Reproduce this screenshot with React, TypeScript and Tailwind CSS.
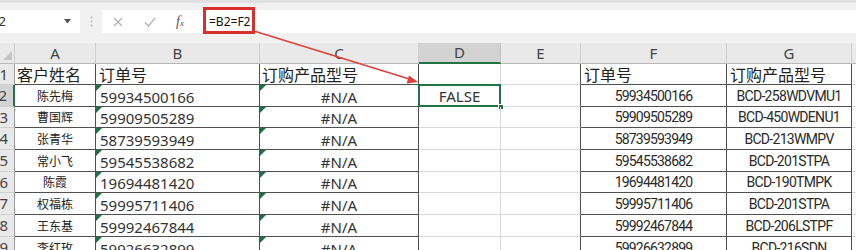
import React from "react";

type Row = { n: number; a: string; b: string; f: string; g: string; h: string };

const rows: Row[] = [
  { n: 2, a: "陈先梅", b: "59934500166", f: "59934500166", g: "BCD-258WDVMU1", h: "h-[22px]" },
  { n: 3, a: "曹国辉", b: "59909505289", f: "59909505289", g: "BCD-450WDENU1", h: "h-[21px]" },
  { n: 4, a: "张青华", b: "58739593949", f: "58739593949", g: "BCD-213WMPV", h: "h-[22px]" },
  { n: 5, a: "常小飞", b: "59545538682", f: "59545538682", g: "BCD-201STPA", h: "h-[22px]" },
  { n: 6, a: "陈霞", b: "19694481420", f: "19694481420", g: "BCD-190TMPK", h: "h-[21px]" },
  { n: 7, a: "权福栋", b: "59995711406", f: "59995711406", g: "BCD-201STPA", h: "h-[22px]" },
  { n: 8, a: "王东基", b: "59992467844", f: "59992467844", g: "BCD-206LSTPF", h: "h-[22px]" },
  { n: 9, a: "李红玫", b: "59926632899", f: "59926632899", g: "BCD-216SDN", h: "h-[22px]" },
];

const cjk = "font-['Noto_Sans_CJK_SC','Noto_Sans',sans-serif]";
const num = "font-['Noto_Sans','Noto_Sans_CJK_SC',sans-serif]";
const narrow = "font-['Roboto','Liberation_Sans',sans-serif]";

function Tri() {
  return (
    <span className="absolute top-0 left-0 w-0 h-0 border-t-[6px] border-t-[#1e7145] border-r-[6px] border-r-transparent" />
  );
}

export default function App() {
  return (
    <div className="relative w-[856px] h-[250px] overflow-hidden bg-white text-[#222]">
      {/* Formula bar */}
      <div className="h-[43px] bg-[#f1f1f1] border-t-[3px] border-t-[#e0e0e0] flex items-start pt-[7px]">
        <div className="relative w-[80px] h-[23px] bg-white flex items-center overflow-hidden">
          <span className={`-ml-[11px] text-[13px] text-[#333] ${num}`}>D2</span>
          <svg className="absolute left-[64px] top-[9px]" width="7" height="5" viewBox="0 0 7 5">
            <path d="M0 0 L7 0 L3.5 4.5 Z" fill="#555" />
          </svg>
        </div>
        <div className="w-[22px] h-[23px] flex items-center justify-center">
          <svg width="3" height="11" viewBox="0 0 3 11">
            <circle cx="1.5" cy="1.5" r="1" fill="#b8b8b8" />
            <circle cx="1.5" cy="5.5" r="1" fill="#b8b8b8" />
            <circle cx="1.5" cy="9.5" r="1" fill="#b8b8b8" />
          </svg>
        </div>
        <div className="flex-1 h-[23px] bg-white flex items-center">
          <div className="w-[32px] flex justify-center">
            <svg width="10" height="10" viewBox="0 0 10 10">
              <path d="M1 1 L9 9 M9 1 L1 9" stroke="#b3b3b3" strokeWidth="1.2" />
            </svg>
          </div>
          <div className="w-[32px] flex justify-center">
            <svg width="12" height="10" viewBox="0 0 12 10">
              <path d="M1 5.5 L4.5 9 L11 1" stroke="#b3b3b3" strokeWidth="1.2" fill="none" />
            </svg>
          </div>
          <div className="w-[28px] flex justify-center">
            <span className="italic text-[14px] text-[#555] font-['Liberation_Serif',serif] leading-none">
              f<span className="text-[9px]">x</span>
            </span>
          </div>
          <span className={`ml-[15px] text-[12px] text-[#111] ${num}`}>=B2=F2</span>
        </div>
      </div>

      {/* Column headers */}
      <div className={`flex h-[21px] ${num} text-[15px] text-[#444]`}>
        <div className="relative w-[15px] bg-[#e9e9e9] border-r border-r-[#cfcfcf] border-b border-b-[#b8b8b8]">
          <span className="absolute right-[2px] bottom-[3px] w-0 h-0 border-l-[9px] border-l-transparent border-b-[9px] border-b-[#c4c4c4]" />
        </div>
        <div className="w-[81px] bg-[#e9e9e9] border-r border-r-[#cfcfcf] border-b border-b-[#b8b8b8] flex items-center justify-center">A</div>
        <div className="w-[164px] bg-[#e9e9e9] border-r border-r-[#cfcfcf] border-b border-b-[#b8b8b8] flex items-center justify-center">B</div>
        <div className="w-[159px] bg-[#e9e9e9] border-r border-r-[#cfcfcf] border-b border-b-[#b8b8b8] flex items-center justify-center">C</div>
        <div className="w-[82px] bg-[#d3d3d3] border-r border-r-[#c2c2c2] border-b-2 border-b-[#217346] flex items-center justify-center">D</div>
        <div className="w-[80px] bg-[#e9e9e9] border-r border-r-[#cfcfcf] border-b border-b-[#b8b8b8] flex items-center justify-center">E</div>
        <div className="w-[146px] bg-[#e9e9e9] border-r border-r-[#cfcfcf] border-b border-b-[#b8b8b8] flex items-center justify-center">F</div>
        <div className="w-[125px] bg-[#e9e9e9] border-r border-r-[#cfcfcf] border-b border-b-[#b8b8b8] flex items-center justify-center">G</div>
        <div className="flex-1 bg-[#e9e9e9] border-b border-b-[#b8b8b8]" />
      </div>

      {/* Row 1 */}
      <div className={`flex h-[21px] ${cjk} text-[16px] text-[#222]`}>
        <div className={`w-[15px] overflow-hidden bg-[#e9e9e9] border-r border-r-[#9b9b9b] border-b border-b-[#cfcfcf] flex items-center justify-end pr-[6px] ${num} text-[15px] text-[#444]`}>1</div>
        <div className="w-[81px] border-r border-r-[#505050] border-b border-b-[#505050] flex items-center pl-[2px] leading-none">客户姓名</div>
        <div className="w-[164px] border-r border-r-[#505050] border-b border-b-[#505050] flex items-center pl-[3px] leading-none">订单号</div>
        <div className="w-[159px] border-r border-r-[#505050] border-b border-b-[#505050] flex items-center pl-[2px] leading-none">订购产品型号</div>
        <div className="w-[82px] border-r border-r-[#dadada] border-b border-b-[#dadada]" />
        <div className="w-[80px] border-r border-r-[#505050] border-b border-b-[#dadada]" />
        <div className="w-[146px] border-r border-r-[#505050] border-b border-b-[#505050] flex items-center pl-[3px] leading-none">订单号</div>
        <div className="w-[125px] border-r border-r-[#505050] border-b border-b-[#505050] flex items-center pl-[3px] leading-none">订购产品型号</div>
        <div className="flex-1 border-b border-b-[#dadada]" />
      </div>

      {/* Data rows */}
      {rows.map((r) => {
        const sel = r.n === 2;
        return (
          <div key={r.n} className={`flex ${r.h}`}>
            <div
              className={`w-[15px] overflow-hidden border-b border-b-[#cfcfcf] flex items-center justify-end pr-[6px] ${num} text-[15px] text-[#444] ${
                sel ? "bg-[#d3d3d3] border-r-2 border-r-[#217346]" : "bg-[#e9e9e9] border-r border-r-[#9b9b9b]"
              }`}
            >
              {r.n}
            </div>
            <div className={`w-[81px] border-r border-r-[#505050] border-b border-b-[#505050] flex items-center justify-center ${cjk} text-[12px] text-[#222]`}>
              {r.a}
            </div>
            <div className={`relative w-[164px] border-r border-r-[#505050] border-b border-b-[#505050] flex items-center pl-[4px] pt-[3px] ${num} text-[15px] text-[#333]`}>
              <Tri />
              {r.b}
            </div>
            <div className={`relative w-[159px] border-r border-r-[#505050] border-b border-b-[#505050] flex items-center justify-center pt-[3px] ${num} text-[15px] text-[#333]`}>
              <Tri />
              #N/A
            </div>
            <div className={`relative w-[82px] border-r border-r-[#dadada] border-b border-b-[#dadada] flex items-center justify-center pt-[2px] ${num} text-[15px] text-[#333]`}>
              {sel ? "FALSE" : ""}
              {sel && (
                <>
                  <span className="absolute -left-[1px] -top-[1px] -right-[1px] -bottom-[1px] border-2 border-[#217346]" />
                  <span className="absolute -right-[4px] -bottom-[4px] w-[6px] h-[6px] bg-[#217346] border border-white" />
                </>
              )}
            </div>
            <div className="w-[80px] border-r border-r-[#505050] border-b border-b-[#dadada]" />
            <div className={`w-[146px] border-r border-r-[#505050] border-b border-b-[#505050] flex items-center justify-center pt-[1px] ${narrow} text-[14px] tracking-[-0.8px] text-[#2a2a2a]`}>
              {r.f}
            </div>
            <div className={`w-[125px] border-r border-r-[#505050] border-b border-b-[#505050] flex items-center justify-center pt-[1px] ${narrow} text-[14px] tracking-[-0.7px] text-[#2a2a2a]`}>
              {r.g}
            </div>
            <div className="flex-1 border-b border-b-[#dadada]" />
          </div>
        );
      })}

      {/* Annotation: red box and arrow */}
      <div className="absolute left-[203px] top-[7px] w-[52px] h-[27px] border-[3px] border-[#d9302d]" />
      <svg className="absolute left-0 top-0 pointer-events-none" width="856" height="250" viewBox="0 0 856 250">
        <line x1="254" y1="31" x2="411" y2="79.5" stroke="#e0403a" strokeWidth="1.6" />
        <path d="M418 82 L409 75.5 L406.5 83.5 Z" fill="#e0403a" />
      </svg>
    </div>
  );
}
